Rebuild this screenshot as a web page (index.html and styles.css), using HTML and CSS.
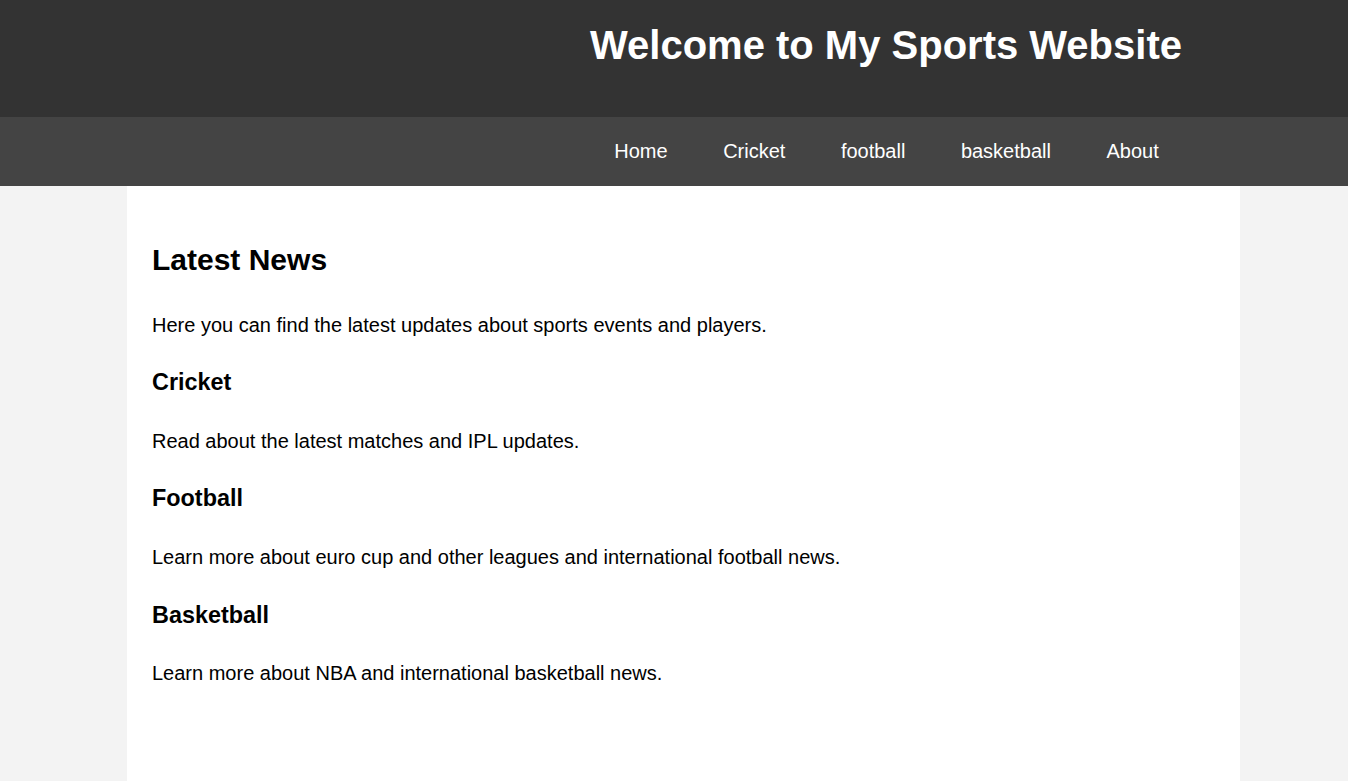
FILE: index.html
```html
<!DOCTYPE html>
<html lang="en">
<head>
<meta charset="utf-8">
<title>My Sports Website</title>
<link rel="stylesheet" href="styles.css">
</head>
<body>
<header class="site-header">
  <h1 class="site-title">Welcome to My Sports Website</h1>
</header>
<nav class="site-nav">
  <ul class="nav-list">
    <li><a href="#" class="nav-link">Home</a></li>
    <li><a href="#" class="nav-link">Cricket</a></li>
    <li><a href="#" class="nav-link">football</a></li>
    <li><a href="#" class="nav-link">basketball</a></li>
    <li><a href="#" class="nav-link">About</a></li>
  </ul>
</nav>
<main class="content">
  <h2 class="section-title">Latest News</h2>
  <p>Here you can find the latest updates about sports events and players.</p>
  <h3 class="sport-title">Cricket</h3>
  <p>Read about the latest matches and IPL updates.</p>
  <h3 class="sport-title">Football</h3>
  <p>Learn more about euro cup and other leagues and international football news.</p>
  <h3 class="sport-title">Basketball</h3>
  <p>Learn more about NBA and international basketball news.</p>
</main>
</body>
</html>
```

FILE: styles.css
```css
html, body {
  margin: 0;
  padding: 0;
}
body {
  font-family: "Liberation Sans", Arial, sans-serif;
  font-size: 20px;
  line-height: 1.6;
  background: #f3f3f3;
  color: #000;
}
.site-header {
  background: #333333;
  height: 117px;
  box-sizing: border-box;
  padding: 13px 0 0 424px;
  display: flex;
  justify-content: center;
}
.site-title {
  margin: 0;
  font-size: 40px;
  line-height: 64px;
  color: #fff;
  font-weight: bold;
}
.site-nav {
  background: #444444;
  height: 69px;
  box-sizing: border-box;
  padding: 18px 0 0 424px;
}
.nav-list {
  list-style: none;
  margin: 0;
  padding: 0 0 0 1px;
  display: flex;
  justify-content: center;
  gap: 55.5px;
}
.nav-link {
  color: #fff;
  text-decoration: none;
  line-height: 32px;
}
.content {
  display: block;
  background: #fff;
  width: 1113px;
  box-sizing: border-box;
  margin-left: 127px;
  padding: 25px 25px 80px;
}
.section-title {
  font-size: 30px;
  margin: 24.9px 0;
}
.sport-title {
  font-size: 23.4px;
  margin: 23.4px 0;
}
.content p {
  margin: 20px 0;
}
```
